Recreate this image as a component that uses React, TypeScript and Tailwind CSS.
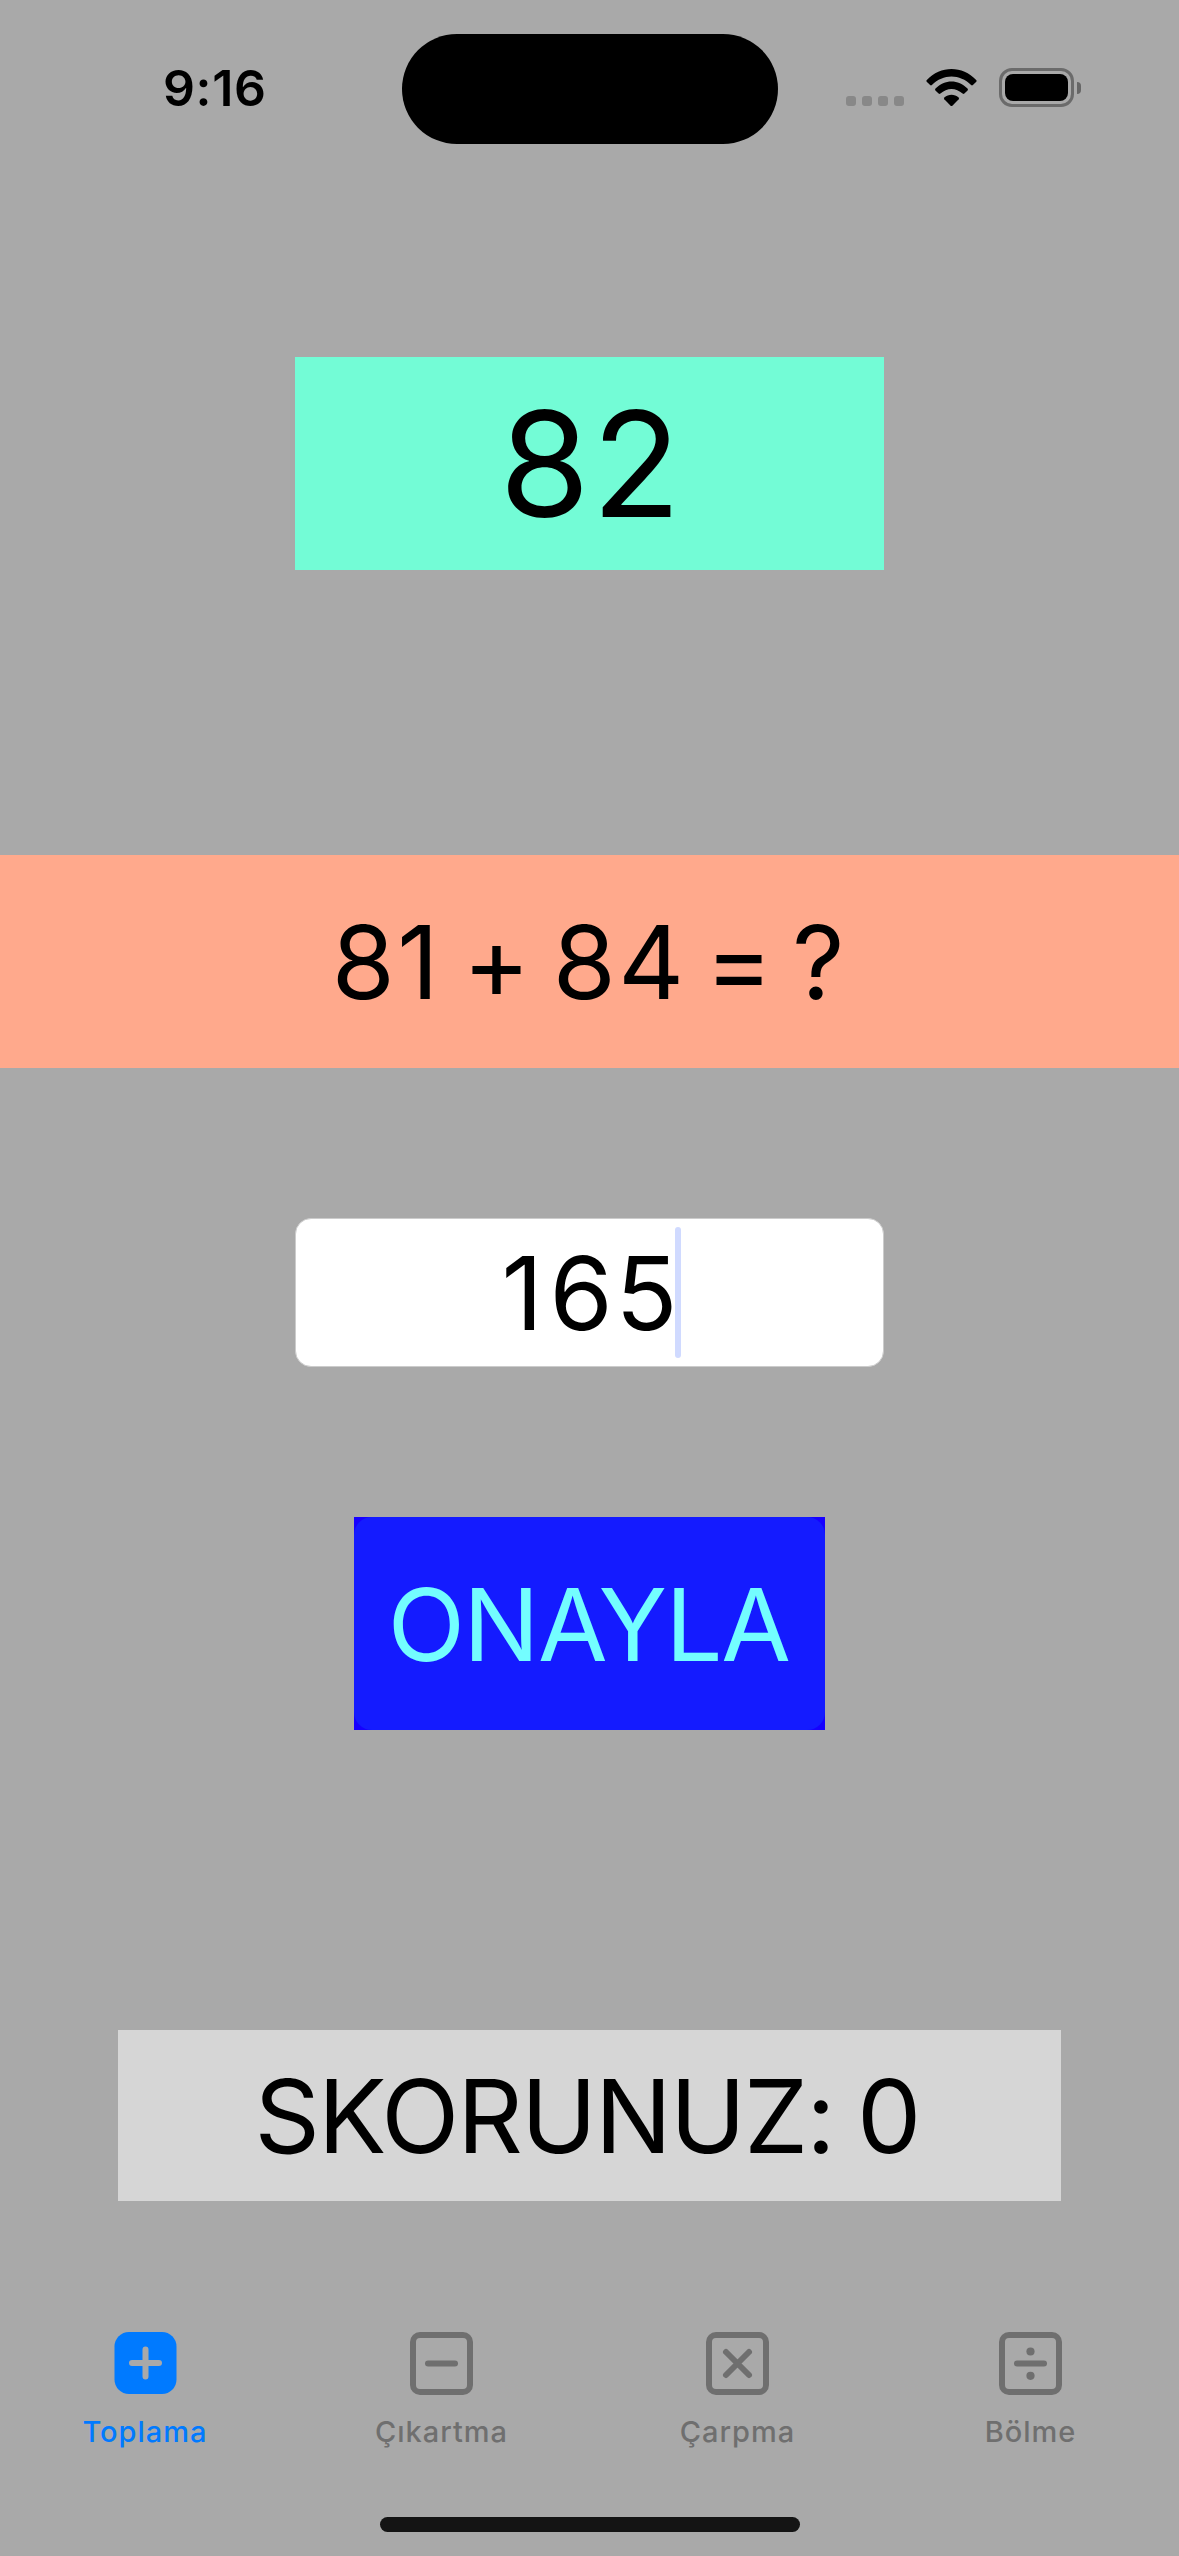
import type { ReactNode } from 'react';

function StatusBar() {
  return (
    <header className="grid h-[178px] grid-cols-[401.500px_376px_1fr] items-start">
      <div className="mt-[63px] pl-[163px] text-[50px] leading-[50px] font-semibold tracking-[0.64px]">9:16</div>
      <div className="mt-[34px] h-[110px] rounded-full bg-black" />
      <div className="mt-[68px] flex items-start pl-[68.500px]">
        <div className="mt-[28px] flex gap-[6px]">
          {[0, 1, 2, 3].map((dot) => (
            <span key={dot} className="size-[10px] rounded-[3px] bg-[#888888]" />
          ))}
        </div>
        <svg className="ml-[22px] h-[39px] w-[51px]" viewBox="0 0 51 39" fill="none">
          <path
            d="M5.9 17.6Q5 18.5 4.100 17.600L0.700 14.200Q0 13.300 0.800 12.400C14.400 -2.300 36.600 -2.300 50.200 12.400Q51 13.300 50.300 14.200L46.900 17.600Q46 18.500 45.100 17.600C33.900 6.100 17.100 6.100 5.900 17.600Z"
            fill="#000"
            transform="translate(0 -0.5)"
          />
          <path
            d="M14.400 26.200Q13.500 27 12.600 26.200L9.400 23Q8.600 22.100 9.500 21.200C18.700 11.700 32.300 11.700 41.500 21.200Q42.400 22.100 41.600 23L38.400 26.200Q37.500 27 36.600 26.200C30.100 19.900 20.900 19.900 14.400 26.200Z"
            fill="#000"
            transform="translate(0 -0.600)"
          />
          <path
            d="M24.600 37.700L18.300 31.300Q17.500 30.400 18.400 29.500C22.400 25.900 28.600 25.900 32.600 29.500Q33.500 30.400 32.700 31.300L26.400 37.700Q25.500 38.500 24.600 37.700Z"
            fill="#000"
          />
        </svg>
        <div className="ml-[22px] flex items-center">
          <div className="h-[39px] w-[75px] rounded-[13px] border-[3px] border-[#6b6b6b] p-[3px]">
            <div className="h-full w-full rounded-[8px] bg-black" />
          </div>
          <div className="ml-[3px] h-[12px] w-[4px] rounded-r-full bg-[#666666]" />
        </div>
      </div>
    </header>
  );
}

const frame = (
  <rect x="3" y="3" width="57" height="57" rx="7" stroke="currentColor" strokeWidth="6" />
);

const tabs: { label: string; icon: ReactNode; active?: boolean }[] = [
  {
    label: 'Toplama',
    active: true,
    icon: (
      <>
        <rect x="0.500" width="62" height="62" rx="14.500" fill="currentColor" />
        <path d="M18 31H45M31.500 17.500V44.500" stroke="#a9a9a9" strokeWidth="6" strokeLinecap="round" />
      </>
    ),
  },
  {
    label: 'Çıkartma',
    icon: (
      <>
        {frame}
        <path d="M18 31.500H45" stroke="currentColor" strokeWidth="6" strokeLinecap="round" />
      </>
    ),
  },
  {
    label: 'Çarpma',
    icon: (
      <>
        {frame}
        <path d="M20 20L43 43M43 20L20 43" stroke="currentColor" strokeWidth="6" strokeLinecap="round" />
      </>
    ),
  },
  {
    label: 'Bölme',
    icon: (
      <>
        {frame}
        <path d="M18 31.500H45" stroke="currentColor" strokeWidth="6" strokeLinecap="round" />
        <circle cx="31.500" cy="19.500" r="4.100" fill="currentColor" />
        <circle cx="31.500" cy="43.800" r="4.100" fill="currentColor" />
      </>
    ),
  },
];

function TabBar() {
  return (
    <nav className="mt-[131px] grid grid-cols-[290px_303px_289px_297px]">
      {tabs.map((tab) => (
        <button
          key={tab.label}
          className={
            tab.active
              ? 'flex flex-col items-center text-[#007aff]'
              : 'flex flex-col items-center text-[#6f6f6f]'
          }
        >
          <svg className="size-[63px]" viewBox="0 0 63 63" fill="none">
            {tab.icon}
          </svg>
          <span className="mt-[21px] text-[29px] leading-[31px] font-medium tracking-[1px]">{tab.label}</span>
        </button>
      ))}
    </nav>
  );
}

export default function App() {
  return (
    <div className="flex h-[2556px] w-[1179px] flex-col overflow-hidden bg-[#a9a9a9] font-['Inter',sans-serif] text-black">
      <StatusBar />
      <main className="flex flex-col items-center">
        <div className="mt-[179px] flex h-[213px] w-[589px] items-center justify-center bg-[#73fcd6] pl-[3px] text-[146px] leading-none tracking-[1.8px]">
          82
        </div>
        <div className="mt-[285px] flex h-[213px] w-full items-center justify-center bg-[#ffa98c] pr-[2px] text-[102px] leading-none tracking-[1px]">
          <p className="whitespace-pre [word-spacing:-8.200px]">
            <span className="tracking-[2.500px]">81</span>
            {' + '}
            <span className="tracking-[2.500px]">84</span>
            <span className="[word-spacing:-11.200px]">{' = ?'}</span>
          </p>
        </div>
        <div className="mt-[150px] flex h-[149px] w-[589px] items-center justify-center rounded-[16px] border border-[#cccccc] bg-white pl-[4px] text-[102px] leading-none">
          <span className="tracking-[6.500px]">1</span>
          <span className="tracking-[2.800px]">65</span>
          <span className="-ml-[5px] h-[131px] w-[6px] rounded-full bg-[#d0daff]" />
        </div>
        <div className="mt-[150px] h-[213px] w-[471px] bg-[#1600ff]">
          <button className="flex h-full w-full items-center justify-center rounded-[18px] bg-[#141bff] pt-[2px] pr-[2px] text-[101px] leading-none tracking-[-1.540px] text-[#73fdff]">
            ONAYLA
          </button>
        </div>
        <div className="mt-[300px] flex h-[171px] w-[943px] items-center justify-center bg-[#d6d6d6] pr-[5px] text-[102px] leading-none tracking-[-1.900px] [word-spacing:-3.400px]">
          SKORUNUZ: 0
        </div>
      </main>
      <TabBar />
      <div className="mx-auto mt-auto mb-[24px] h-[15px] w-[420px] shrink-0 rounded-full bg-[#141414]" />
    </div>
  );
}
